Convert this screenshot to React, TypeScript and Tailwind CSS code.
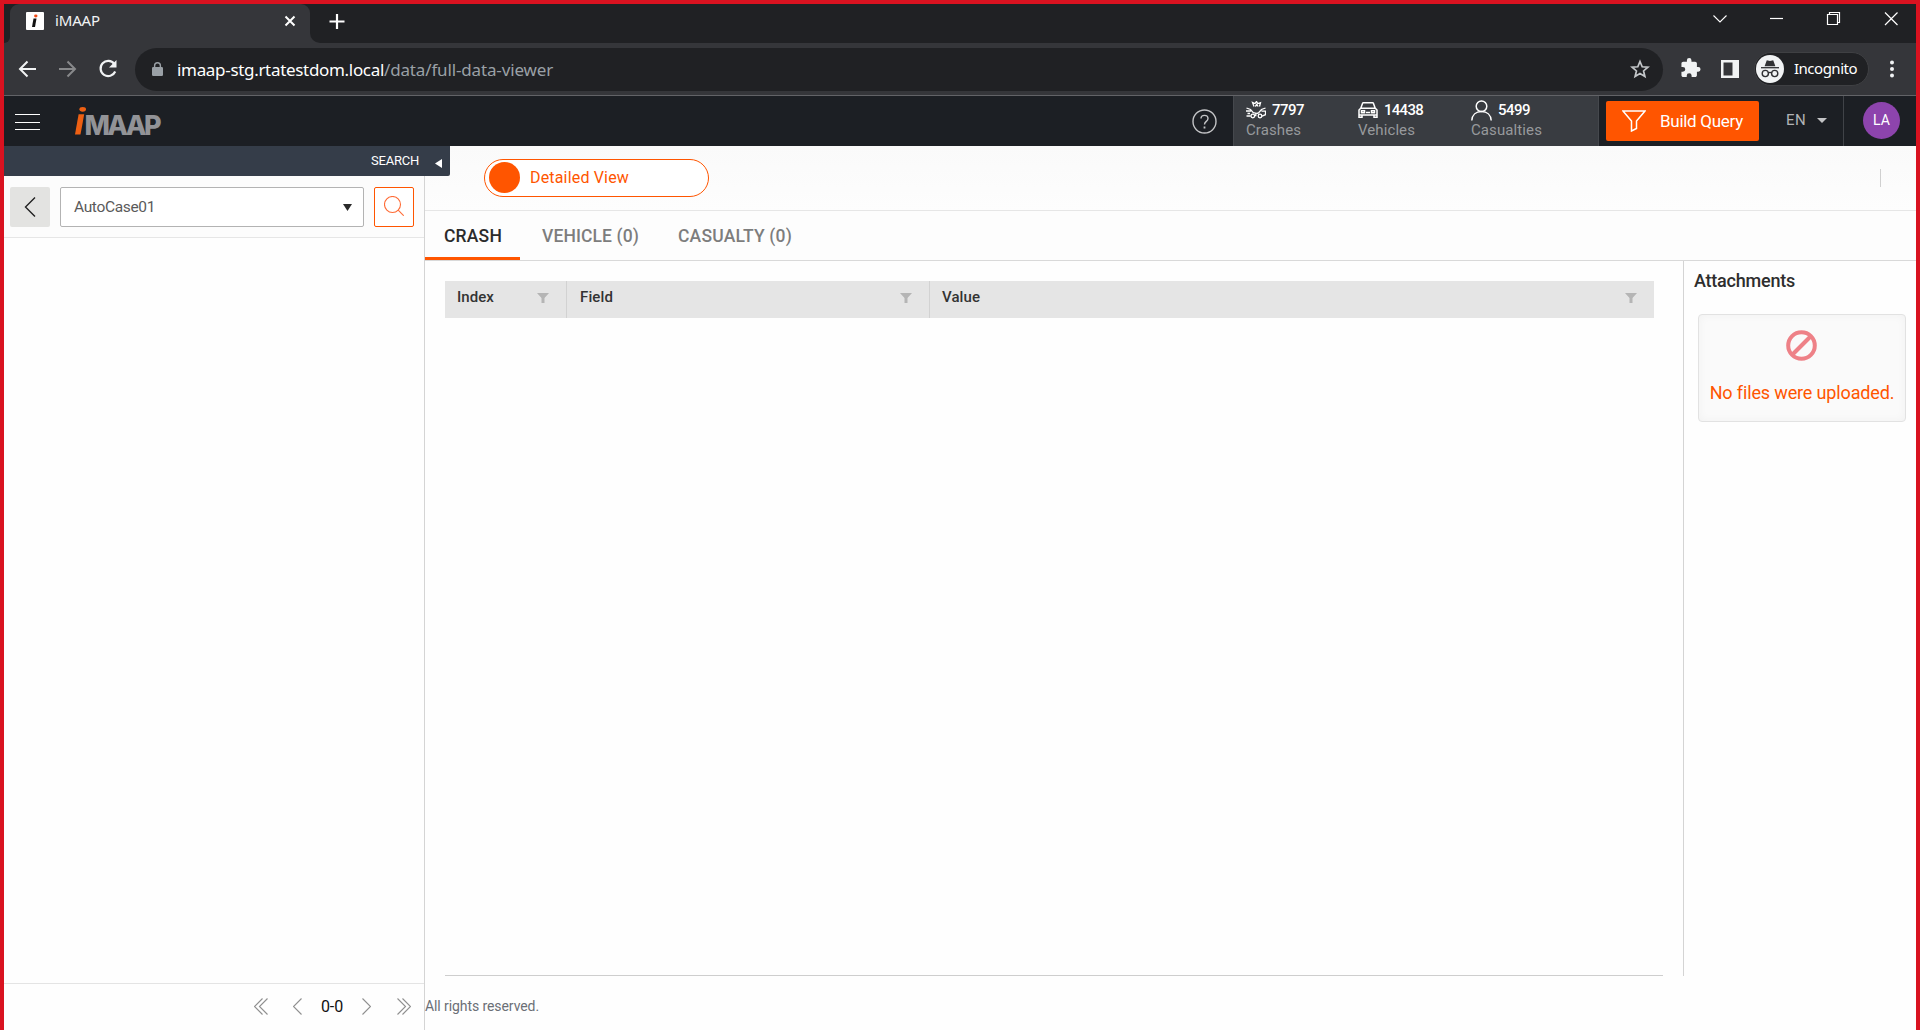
import React from "react";

type FitProps = { text: string; width: number; className?: string };

/** Single line of text whose letter spacing is tuned to a fixed advance width. */
function Fit({ text, width, className = "" }: FitProps) {
  const ref = React.useRef<HTMLSpanElement>(null);
  const [spacing, setSpacing] = React.useState(0);
  React.useLayoutEffect(() => {
    const el = ref.current;
    if (el) setSpacing((width - el.getBoundingClientRect().width) / text.length);
  }, [text, width]);
  return (
    <span ref={ref} className={`inline-block shrink-0 whitespace-nowrap ${className}`} style={{ letterSpacing: `${spacing}px` }}>
      {text}
    </span>
  );
}

function TabStrip() {
  return (
    <div className="flex h-[39px] shrink-0 bg-[#202124]">
      <div className="flex w-[6px] items-end bg-[#35363a]">
        <div className="h-full w-[6px] rounded-br-[6px] bg-[#202124]" />
      </div>
      <div className="flex h-[39px] w-[300px] items-center rounded-t-[9px] bg-[#35363a] pb-[5px] pl-4">
        <svg width="18" height="18" viewBox="0 0 18 18">
          <rect width="18" height="18" rx="1" fill="#fff" />
          <path d="M7.500 6.500h3L9 15H6z" fill="#111" />
          <ellipse cx="9.800" cy="4" rx="1.700" ry="1.400" fill="#f04a16" />
        </svg>
        <Fit text="iMAAP" width={45} className="mb-[2px] ml-[11px] font-['Noto_Sans'] text-[15px] leading-5 text-[#f1f3f4]" />
        <svg className="ml-[184px]" width="12" height="12" viewBox="0 0 12 12" stroke="#fff" strokeWidth="2">
          <path d="M1.500 1.500l9 9M10.500 1.500l-9 9" />
        </svg>
      </div>
      <div className="w-[10px] bg-[#35363a]">
        <div className="h-full w-[10px] rounded-bl-[10px] bg-[#202124]" />
      </div>
      <svg className="ml-[9px] mt-[9px]" width="16" height="17" viewBox="0 0 16 17" stroke="#fff" strokeWidth="2.200">
        <path d="M0.500 8.500h15M8 1v15" />
      </svg>
      <div className="flex-1" />
      <svg className="mt-[8px]" width="190" height="14" viewBox="0 0 190 14" fill="none" stroke="#fff" strokeWidth="1.200">
        <path d="M0.500 3.500L7 10l6.500-6.500" strokeWidth="1.100" />
        <path d="M57 6.500h13" />
        <path d="M114.500 2.500h10v10h-10zM116.500 2.500v-2h10v10h-2" />
        <path d="M172 0.500l12.500 12.500M184.500 0.500L172 13" />
      </svg>
      <div className="w-[13px]" />
    </div>
  );
}

function AddressBar() {
  return (
    <div className="flex h-[52px] shrink-0 items-center bg-[#35363a]">
      <svg className="ml-[14px]" width="18" height="18" viewBox="0 0 18 18" fill="none" stroke="#f1f3f4" strokeWidth="2">
        <path d="M18 9H2.500M9.500 1.500L2 9l7.500 7.500" />
      </svg>
      <svg className="ml-[23px]" width="18" height="18" viewBox="0 0 18 18" fill="none" stroke="#88898b" strokeWidth="2">
        <path d="M0 9h15.500M8.500 1.500L16 9l-7.500 7.500" />
      </svg>
      <svg className="ml-[21px]" width="20" height="20" viewBox="0 0 20 20" fill="none" stroke="#f1f3f4" strokeWidth="2.200">
        <path d="M16.300 5A7.600 7.600 0 1 0 17.200 12.500" />
        <path d="M18.500 1v7.500H11z" fill="#f1f3f4" stroke="none" />
      </svg>
      <div className="ml-[17px] flex h-[43px] w-[1528px] items-center rounded-full bg-[#202124] pl-[17px] pr-[13px]">
        <svg width="11" height="14" viewBox="0 0 11 14">
          <rect y="5" width="11" height="9" rx="1.200" fill="#9aa0a6" />
          <path d="M2.600 5.500V3.700a2.900 2.900 0 0 1 5.800 0v1.800" fill="none" stroke="#9aa0a6" strokeWidth="1.400" />
        </svg>
        <span className="ml-[14px] mt-[1px] font-['Noto_Sans'] text-[17px] leading-6">
          <Fit text="imaap-stg.rtatestdom.local" width={207} className="text-white" />
          <Fit text="/data/full-data-viewer" width={169} className="text-[#9aa0a6]" />
        </span>
        <div className="flex-1" />
        <svg width="20" height="20" viewBox="0 0 20 20" fill="none" stroke="#c4c7ca" strokeWidth="1.700">
          <path d="M10 2.500l2.200 5.300 5.700.45-4.350 3.700 1.350 5.550L10 14.500l-4.900 3 1.350-5.550L2.100 8.250l5.700-.45z" />
        </svg>
      </div>
      <svg className="ml-[18px] mt-[-3px]" width="20" height="20" viewBox="1.500 1 22 22" fill="#f1f3f4">
        <path d="M20.500 11H19V7c0-1.100-.9-2-2-2h-4V3.500a2.500 2.500 0 0 0-5 0V5H4c-1.100 0-2 .9-2 2v3.800h1.500a2.700 2.700 0 0 1 0 5.400H2V20c0 1.100.9 2 2 2h3.800v-1.500a2.700 2.700 0 0 1 5.400 0V22H17c1.100 0 2-.9 2-2v-4h1.500a2.500 2.500 0 0 0 0-5z" />
      </svg>
      <svg className="ml-[20px]" width="18" height="18" viewBox="0 0 18 18">
        <path d="M0 0h18v18H0zM2.500 2.500v13h9v-13z" fill="#f1f3f4" fillRule="evenodd" />
      </svg>
      <div className="ml-[15px] flex h-[34px] w-[115px] items-center rounded-full border border-[#3f4043] bg-[#202124] pl-px">
        <svg width="28" height="28" viewBox="0 0 28 28">
          <circle cx="14" cy="14" r="14" fill="#f1f3f4" />
          <path d="M10.800 5.200l3.200.8 3.200-.8 2.200 6H8.600z" fill="#303134" />
          <path d="M5 12.700h18" stroke="#303134" strokeWidth="1.300" />
          <g fill="none" stroke="#303134" strokeWidth="1.400">
            <circle cx="9.300" cy="18.500" r="3.100" />
            <circle cx="18.700" cy="18.500" r="3.100" />
            <path d="M12.300 18q1.700-1.200 3.400 0" />
          </g>
        </svg>
        <Fit text="Incognito" width={63} className="mb-[2px] ml-[10px] font-['Noto_Sans'] text-[15px] leading-5 text-white" />
      </div>
      <svg className="ml-[20px]" width="6" height="18" viewBox="0 0 6 18" fill="#f1f3f4">
        <circle cx="3" cy="2.500" r="2" />
        <circle cx="3" cy="9" r="2" />
        <circle cx="3" cy="15.500" r="2" />
      </svg>
    </div>
  );
}

function CrashIcon() {
  return (
    <svg width="20" height="18" viewBox="0 0 20 18" fill="none" stroke="#fff" strokeWidth="1.300">
      <path d="M8 5.500L6.500 1.500l2.500 1L10.500.500l1.300 2 2.700-.800-1 3.800M9.300 5.500l1.500-2 1.300 2" />
      <path d="M0.500 7l4 1.500 2.800 3.200 2.500.5v2.500H9M0 10h5M1.500 12.500h2.500M0.500 15h4.200M19.500 7l-4 1.500-3 3.500-2 .500M15.500 10.200h4v3.500l-3.500 1.500" />
      <circle cx="6.800" cy="15" r="1.800" />
      <circle cx="14" cy="15" r="1.800" />
    </svg>
  );
}

function CarIcon() {
  return (
    <svg width="20" height="16" viewBox="0 0 20 16" fill="none" stroke="#fff" strokeWidth="1.500">
      <path d="M2.700 6.500L4.500 1.400Q4.700.8 5.400.8h9.200q.7 0 .9.600l1.800 5.100M1 13V8l1.700-1.700h14.600L19 8v5zM1 13v2.200h3V13M16 13v2.200h3V13" />
      <rect x="3.500" y="8.700" width="3" height="2" />
      <rect x="13.500" y="8.700" width="3" height="2" />
      <path d="M8 10.500h4" />
    </svg>
  );
}

function PersonIcon() {
  return (
    <svg width="21" height="21" viewBox="0 0 21 21" fill="none" stroke="#fff" strokeWidth="1.500">
      <circle cx="10.500" cy="6.200" r="5.300" />
      <path d="M.8 20.500c.3-5.500 4-9 9.700-9s9.400 3.500 9.700 9" />
    </svg>
  );
}

type StatProps = { icon: React.ReactNode; value: string; valueWidth: number; label: string; labelWidth: number; gap: string };

function Stat({ icon, value, valueWidth, label, labelWidth, gap }: StatProps) {
  return (
    <div className="flex h-[50px] flex-col items-start pt-[3px]">
      <div className={`flex h-[22px] items-center ${gap}`}>
        {icon}
        <Fit text={value} width={valueWidth} className="text-[15px] font-medium leading-5 text-white" />
      </div>
      <Fit text={label} width={labelWidth} className="mt-[-1px] text-[15px] leading-5 text-[#97999c]" />
    </div>
  );
}

function AppHeader() {
  return (
    <header className="flex h-[50px] shrink-0 bg-[#1c1f24]">
      <div className="ml-[11px] mt-[18px] flex h-[16px] w-[25px] shrink-0 flex-col justify-between">
        <div className="h-px bg-white" />
        <div className="h-px bg-white" />
        <div className="h-px bg-white" />
      </div>
      <svg className="ml-[35px] mt-[10px]" width="92" height="38" viewBox="0 0 92 38">
        <ellipse cx="7.700" cy="3.300" rx="3.300" ry="2.400" fill="#ee6013" />
        <path d="M3.600 8.300h5.600L5.500 28.500H0z" fill="#ee6013" />
        <text x="9.500" y="28.500" textLength="77" lengthAdjust="spacing" fill="#929397" fontFamily="Inter" fontWeight="800" fontSize="27">MAAP</text>
      </svg>
      <div className="flex-1" />
      <svg className="mt-[13px]" width="25" height="25" viewBox="0 0 25 25" fill="none" stroke="#c3c4c6" strokeWidth="1.400">
        <circle cx="12.500" cy="12.500" r="11.500" />
        <path d="M9 9.500c0-4.200 7-4.200 7 0 0 3-3.500 2.800-3.500 6" />
        <path d="M12.500 17.500v2" strokeWidth="1.800" />
      </svg>
      <div className="ml-[16px] flex h-[50px] w-[366px] border-x border-[#45484d] bg-[#393c41] pl-[12px]">
        <div className="w-[112px]"><Stat icon={<CrashIcon />} value="7797" valueWidth={32} label="Crashes" labelWidth={55} gap="gap-[6px]" /></div>
        <div className="w-[113px]"><Stat icon={<CarIcon />} value="14438" valueWidth={39} label="Vehicles" labelWidth={57} gap="gap-[6px]" /></div>
        <Stat icon={<PersonIcon />} value="5499" valueWidth={32} label="Casualties" labelWidth={71} gap="gap-[6px]" />
      </div>
      <div className="ml-[7px] mt-[5px] flex h-10 w-[153px] items-center rounded-[2px] bg-[#ff5500] pl-[16px]">
        <svg width="24" height="22" viewBox="0 0 24 22" fill="none" stroke="#fff" strokeWidth="1.500">
          <path d="M1 1h22L14.500 11v7.500l-5 2.500V11z" />
        </svg>
        <Fit text="Build Query" width={83} className="ml-[14px] text-[17px] leading-5 text-white" />
      </div>
      <div className="flex h-[50px] w-[85px] border-r border-[#404348] pl-[27px] pt-[14px]">
        <Fit text="EN" width={20} className="text-[15px] leading-5 text-[#b1b2b4]" />
        <svg className="ml-[11px] mt-[8px]" width="10" height="5" viewBox="0 0 10 5" fill="#c3c4c6"><path d="M0 0h10L5 5z" /></svg>
      </div>
      <div className="ml-[19px] mt-[6px] mr-[16px] flex size-[37px] items-center justify-center rounded-full bg-[#8d44ad] pb-[2px] text-[14px] leading-5 text-white">
        <Fit text="LA" width={17} />
      </div>
    </header>
  );
}

function Chevron({ double = false, right = false }: { double?: boolean; right?: boolean }) {
  return (
    <svg className={right ? "rotate-180" : ""} width={double ? 14 : 9} height="17" viewBox={double ? "0 0 14 17" : "0 0 9 17"} fill="none" stroke="#8f8f8f" strokeWidth="1.100">
      <path d="M8.500.5l-8 8 8 8" />
      {double && <path d="M13.500.5l-8 8 8 8" />}
    </svg>
  );
}

function SidePanel() {
  return (
    <aside className="flex w-[421px] shrink-0 flex-col border-r border-[#d4d4d4]">
      <div className="relative z-10 flex h-[30px] w-[446px] shrink-0 rounded-br-[2px] bg-[#353d49] pl-[367px]">
        <Fit text="SEARCH" width={48} className="text-[13px] leading-[30px] text-white" />
        <svg className="ml-[16px] mt-[13px]" width="7" height="9" viewBox="0 0 7 9" fill="#fff"><path d="M7 0v9L0 4.500z" /></svg>
      </div>
      <div className="flex h-[62px] shrink-0 border-b border-[#e6e6e6] bg-[#fcfcfc] pl-[6px] pt-[11px]">
        <div className="flex h-10 w-10 items-center justify-center rounded-[2px] bg-[#e3e3e1]">
          <svg width="12" height="20" viewBox="0 0 12 20" fill="none" stroke="#222" strokeWidth="1.400"><path d="M11 .5L1.500 10l9.500 9.500" /></svg>
        </div>
        <div className="ml-[10px] flex h-10 w-[304px] items-center justify-between rounded-[2px] border border-[#b3b3b3] bg-white pl-[13px] pr-[11px]">
          <Fit text="AutoCase01" width={81} className="text-[15.500px] leading-5 text-[#5a5a5a]" />
          <svg width="9" height="7" viewBox="0 0 9 7" fill="#2a2a2a"><path d="M0 0h9L4.500 7z" /></svg>
        </div>
        <div className="ml-[10px] flex h-10 w-10 items-center justify-center rounded-[2px] border border-[#ff5500] bg-white pb-[2px]">
          <svg width="20" height="20" viewBox="0 0 20 20" fill="none" stroke="#ff6b35" strokeWidth="1.100">
            <circle cx="8.500" cy="8.500" r="8" />
            <path d="M14.200 14.200l5.500 5.500" />
          </svg>
        </div>
      </div>
      <div className="flex-1" />
      <div className="flex h-[47px] shrink-0 items-center border-t border-[#e4e4e4] pb-[1px] pl-[250px]">
        <Chevron double />
        <div className="w-[25px]" />
        <Chevron />
        <Fit text="0-0" width={22} className="ml-[19px] mr-[19px] text-[16px] leading-5 text-[#111]" />
        <Chevron right />
        <div className="w-[26px]" />
        <Chevron double right />
      </div>
    </aside>
  );
}

function FilterIcon() {
  return <svg className="mr-[17px]" width="12" height="10" viewBox="0 0 12 10" fill="#b5b5b5"><path d="M0 0h12L7.500 5v5h-3V5z" /></svg>;
}

function HeaderCell({ text, textWidth, className }: { text: string; textWidth: number; className: string }) {
  return (
    <div className={`flex h-[37px] items-center justify-between pb-[3px] ${className}`}>
      <Fit text={text} width={textWidth} className="mb-[2px] text-[15px] font-medium leading-5 text-[#333]" />
      <FilterIcon />
    </div>
  );
}

function Main() {
  return (
    <main className="flex min-w-0 flex-1 flex-col">
      <div className="flex h-[65px] shrink-0 justify-between border-b border-[#e6e6e6] bg-linear-to-b from-[#fafafa] to-[#fdfdfd]">
        <div className="ml-[59px] mt-[13px] flex h-[38px] w-[225px] items-center rounded-full border border-[#ff5500] bg-white pb-[1px] pl-[4px]">
          <div className="size-[31px] rounded-full bg-[#ff5500]" />
          <Fit text="Detailed View" width={99} className="ml-[10px] text-[16px] leading-5 text-[#ff5500]" />
        </div>
        <div className="mr-[35px] mt-[23px] h-[18px] w-px bg-[#d0d0d0]" />
      </div>
      <div className="flex h-[50px] shrink-0 border-b border-[#d9d9d9] bg-[#fdfdfd] text-[17.500px] font-medium leading-[50px] text-[#7d7d7d]">
        <div className="h-[49px] w-[95px] border-b-[3px] border-[#ff5500] pl-[19px] text-[#2b2b2b]"><Fit text="CRASH" width={58} /></div>
        <div className="ml-[22px]"><Fit text="VEHICLE (0)" width={97} /></div>
        <div className="ml-[39px]"><Fit text="CASUALTY (0)" width={114} /></div>
      </div>
      <div className="flex flex-1">
        <section className="ml-[20px] mr-[20px] h-[715px] w-[1218px] shrink-0 border-b border-[#cecece] pt-[20px]">
          <div className="flex w-[1209px] bg-[#e5e5e5]">
            <HeaderCell text="Index" textWidth={37} className="w-[122px] border-r border-[#d2d2d2] pl-[12px]" />
            <HeaderCell text="Field" textWidth={33} className="w-[363px] border-r border-[#d2d2d2] pl-[13px]" />
            <HeaderCell text="Value" textWidth={38} className="w-[724px] pl-[12px]" />
          </div>
        </section>
        <section className="h-[715px] w-[233px] border-l border-[#d4d4d4] pt-[9px]">
          <div className="h-5 pl-[10px]"><Fit text="Attachments" width={101} className="text-[18px] font-medium leading-5 text-[#2e2e2e]" /></div>
          <div className="ml-[14px] mt-[24px] flex h-[108px] w-[208px] flex-col items-center rounded-[4px] border border-[#e2e2e2] bg-[#fafafa] pt-[15px] shadow-[inset_0_0_10px_rgba(0,0,0,0.04)]">
            <svg className="mr-[1px]" width="31" height="31" viewBox="0 0 31 31" fill="none" stroke="#ee8187" strokeWidth="4">
              <circle cx="15.500" cy="15.500" r="13.300" />
              <path d="M6.500 24.500l18-18" />
            </svg>
            <Fit text="No files were uploaded." width={184} className="mt-[22px] text-[18px] leading-5 text-[#ff5500]" />
          </div>
        </section>
      </div>
      <footer className="flex h-[54px] shrink-0 items-start pt-[20px]">
        <Fit text="All rights reserved." width={114} className="text-[14px] leading-5 text-[#6b6f76]" />
      </footer>
    </main>
  );
}

export default function App() {
  return (
    <div className="flex h-[1030px] w-[1920px] flex-col overflow-hidden border-x-4 border-t-4 border-[#d91220] bg-[#fefefe] font-['Roboto',sans-serif]">
      <TabStrip />
      <AddressBar />
      <div className="h-px shrink-0 bg-[#626367]" />
      <AppHeader />
      <div className="flex min-h-0 flex-1">
        <SidePanel />
        <Main />
      </div>
    </div>
  );
}
